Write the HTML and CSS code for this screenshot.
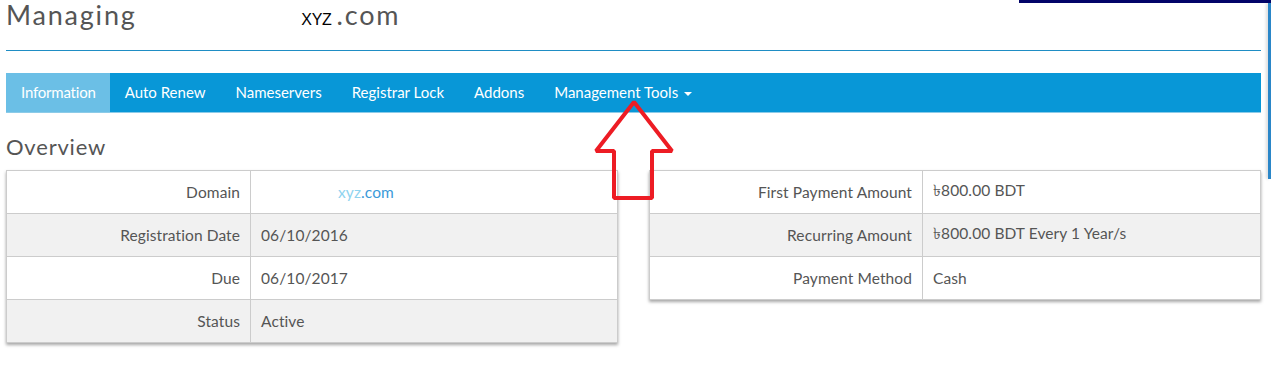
FILE: index.html
```html
<!DOCTYPE html>
<html lang="en">
<head>
    <meta charset="UTF-8">
    <title>Managing xyz.com</title>
    <link rel="stylesheet" href="styles.css">
</head>
<body>
    <div class="top-strip"></div>
    <div class="side-strip"></div>

    <div class="page">
        <h1 class="page-title">Managing <span class="blank"></span><span class="dom-name">XYZ</span>.com</h1>
        <hr class="title-rule">

        <ul class="tabs">
            <li class="tab active">Information</li>
            <li class="tab">Auto Renew</li>
            <li class="tab">Nameservers</li>
            <li class="tab">Registrar Lock</li>
            <li class="tab">Addons</li>
            <li class="tab">Management Tools <span class="caret"></span></li>
        </ul>

        <h2 class="section-title">Overview</h2>

        <div class="overview">
            <table class="info-table">
                <tr><td class="label">Domain</td><td><span class="dom-link"><span class="dom-sub">xyz</span>.com</span></td></tr>
                <tr><td class="label">Registration Date</td><td>06/10/2016</td></tr>
                <tr><td class="label">Due</td><td>06/10/2017</td></tr>
                <tr><td class="label">Status</td><td>Active</td></tr>
            </table>

            <table class="info-table">
                <tr><td class="label">First Payment Amount</td><td>৳800.00 BDT</td></tr>
                <tr><td class="label">Recurring Amount</td><td>৳800.00 BDT Every 1 Year/s</td></tr>
                <tr><td class="label">Payment Method</td><td>Cash</td></tr>
            </table>
        </div>
    </div>

    <svg class="arrow" width="90" height="106" viewBox="0 0 90 106">
        <polygon points="44,4 6,53 24,53 24,100 62,100 62,53 82,53" fill="none" stroke="#ed1c24" stroke-width="4" stroke-linejoin="bevel"/>
    </svg>
</body>
</html>
```

FILE: styles.css
```css
* {
    margin: 0;
    padding: 0;
    box-sizing: border-box;
}

body {
    font-family: Lato, "Noto Sans", sans-serif;
    background-color: #fff;
    color: #555;
    position: relative;
    min-height: 381px;
}

.page {
    padding: 0 10px 0 6px;
}

.page-title {
    font-size: 27px;
    font-weight: normal;
    color: #555;
    line-height: 30px;
    height: 50px;
    letter-spacing: 1.8px;
}

.blank {
    display: inline-block;
    width: 156px;
}

.dom-name {
    font-family: "Liberation Sans", Arial, sans-serif;
    font-size: 16px;
    color: #000;
    letter-spacing: -0.3px;
    margin-right: 5px;
}

.title-rule {
    border: none;
    border-top: 1px solid #1f8dc4;
    margin-bottom: 22px;
}

.tabs {
    list-style: none;
    display: flex;
    background-color: #0897d7;
    height: 40px;
    border-bottom: 1px solid #8ccbe8;
}

.tab {
    color: #fff;
    font-size: 15px;
    padding: 0 15px;
    line-height: 39px;
}

.tab.active {
    background-color: #6bbfe6;
    padding: 0 14px 0 15px;
    letter-spacing: -0.2px;
}

.caret {
    display: inline-block;
    width: 0;
    height: 0;
    border-left: 4px solid transparent;
    border-right: 4px solid transparent;
    border-top: 4px solid #fff;
    vertical-align: middle;
    margin-left: 2px;
}

.section-title {
    font-size: 22px;
    font-weight: normal;
    color: #555;
    margin-top: 21px;
    line-height: 26px;
    height: 36px;
    letter-spacing: 0.8px;
}

.overview {
    display: grid;
    grid-template-columns: 1fr 1fr;
    gap: 31px;
    align-items: start;
}

.info-table {
    width: 100%;
    border-collapse: collapse;
    font-size: 15.5px;
    letter-spacing: 0.1px;
    box-shadow: 0 2px 3px rgba(0,0,0,0.35);
}

.info-table td {
    border: 1px solid #ccc;
    height: 43px;
    padding: 0 10px 1px;
}

.info-table tr:nth-child(even) td {
    background-color: #f1f1f1;
}

.info-table .label {
    text-align: right;
    white-space: nowrap;
}

.info-table:first-child .label {
    width: 244px;
}

.info-table:last-child .label {
    width: 273px;
}

.dom-link {
    color: #3a9ad9;
    margin-left: 77px;
}

.dom-sub {
    color: #8fd3ef;
}

.top-strip {
    position: absolute;
    top: 0;
    left: 1019px;
    right: 0;
    height: 3px;
    background-color: #020468;
}

.side-strip {
    position: absolute;
    top: 3px;
    right: 0;
    width: 3px;
    height: 176px;
    background-color: #2a86c8;
    box-shadow: -2px 0 3px rgba(0,0,0,0.15);
}

.arrow {
    position: absolute;
    left: 590px;
    top: 98px;
}
```
